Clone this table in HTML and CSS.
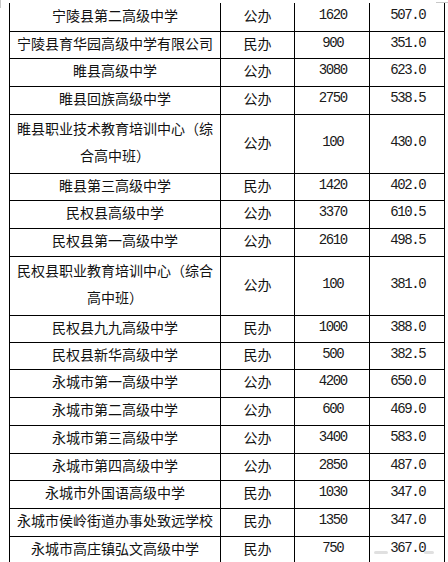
FILE: index.html
```html
<!DOCTYPE html>
<html lang="zh-CN">
<head>
<meta charset="utf-8">
<title>高级中学招生表</title>
<link rel="stylesheet" href="styles.css">
</head>
<body>
<div class="page">
  <span class="mark mark-tl"></span>
  <span class="mark mark-tr"></span>
  <table class="grid">
    <colgroup>
      <col class="c-name"><col class="c-type"><col class="c-num"><col class="c-score">
    </colgroup>
    <tbody>
      <tr class="h28 first"><td>宁陵县第二高级中学</td><td>公办</td><td class="n">1620</td><td class="n">507.0</td></tr>
      <tr class="h27"><td>宁陵县育华园高级中学有限公司</td><td>民办</td><td class="n">900</td><td class="n">351.0</td></tr>
      <tr class="h28"><td>睢县高级中学</td><td>公办</td><td class="n">3080</td><td class="n">623.0</td></tr>
      <tr class="h28"><td>睢县回族高级中学</td><td>公办</td><td class="n">2750</td><td class="n">538.5</td></tr>
      <tr class="h55"><td class="two">睢县职业技术教育培训中心（综<br>合高中班）</td><td>公办</td><td class="n">100</td><td class="n">430.0</td></tr>
      <tr class="h27"><td>睢县第三高级中学</td><td>民办</td><td class="n">1420</td><td class="n">402.0</td></tr>
      <tr class="h28"><td>民权县高级中学</td><td>公办</td><td class="n">3370</td><td class="n">610.5</td></tr>
      <tr class="h28"><td>民权县第一高级中学</td><td>公办</td><td class="n">2610</td><td class="n">498.5</td></tr>
      <tr class="h56"><td class="two">民权县职业教育培训中心（综合<br>高中班）</td><td>公办</td><td class="n">100</td><td class="n">381.0</td></tr>
      <tr class="h27"><td>民权县九九高级中学</td><td>民办</td><td class="n">1000</td><td class="n">388.0</td></tr>
      <tr class="h27"><td>民权县新华高级中学</td><td>民办</td><td class="n">500</td><td class="n">382.5</td></tr>
      <tr class="h28"><td>永城市第一高级中学</td><td>公办</td><td class="n">4200</td><td class="n">650.0</td></tr>
      <tr class="h28"><td>永城市第二高级中学</td><td>公办</td><td class="n">600</td><td class="n">469.0</td></tr>
      <tr class="h28"><td>永城市第三高级中学</td><td>公办</td><td class="n">3400</td><td class="n">583.0</td></tr>
      <tr class="h27"><td>永城市第四高级中学</td><td>公办</td><td class="n">2850</td><td class="n">487.0</td></tr>
      <tr class="h28"><td>永城市外国语高级中学</td><td>民办</td><td class="n">1030</td><td class="n">347.0</td></tr>
      <tr class="h28"><td>永城市侯岭街道办事处致远学校</td><td>民办</td><td class="n">1350</td><td class="n">347.0</td></tr>
      <tr class="h28"><td>永城市高庄镇弘文高级中学</td><td>民办</td><td class="n">750</td><td class="n wm-cell">367.0<span class="wm wm-a"></span><span class="wm wm-b"></span></td></tr>
    </tbody>
  </table>
  <p class="note">注：</p>
</div>
</body>
</html>
```

FILE: styles.css
```css
html, body {
  margin: 0;
  padding: 0;
  background: #ffffff;
}

.page {
  position: relative;
  width: 448px;
  height: 562px;
  overflow: hidden;
  padding-top: 3px;
  box-sizing: border-box;
}

.mark {
  position: absolute;
  background: #c8c8c8;
}
.mark-tl {
  left: 0;
  top: 0;
  width: 1px;
  height: 8px;
}
.mark-tr {
  right: 0;
  top: 2px;
  width: 12px;
  height: 1px;
}

.grid {
  margin-left: 9px;
  border-collapse: collapse;
  table-layout: fixed;
  width: 435px;
  font-family: "Noto Sans CJK SC", "Noto Sans", sans-serif;
  font-size: 14px;
  font-weight: 400;
  color: #111;
}

.c-name { width: 211px; }
.c-type { width: 74px; }
.c-num { width: 75px; }
.c-score { width: 75px; }

.grid td {
  border: 1px solid #000;
  padding: 0 0 4px 0;
  text-align: center;
  vertical-align: middle;
  line-height: 18px;
  white-space: nowrap;
}

.grid tr.first td {
  border-top: none;
}

.grid td.two {
  line-height: 27px;
}

.grid td.n {
  font-family: "Liberation Mono", "DejaVu Sans Mono", monospace;
  font-weight: 400;
  letter-spacing: -1.4px;
  text-indent: 1.4px;
  color: #1a1a1a;
}

.h27 { height: 27px; }
.h28 { height: 28px; }
.h55 { height: 55px; }
.h56 { height: 56px; }

.wm-cell {
  position: relative;
}
.wm {
  position: absolute;
  top: 14px;
  height: 3px;
  background: #d8d8d8;
  border-radius: 2px;
  opacity: 0.8;
}
.wm-a {
  left: 4px;
  width: 14px;
}
.wm-b {
  left: 54px;
  width: 10px;
}

.note {
  margin: 0 0 0 10px;
  padding-top: 0;
  font-family: "Noto Sans CJK SC", sans-serif;
  font-size: 14px;
  line-height: 14px;
  color: #222;
}
```
